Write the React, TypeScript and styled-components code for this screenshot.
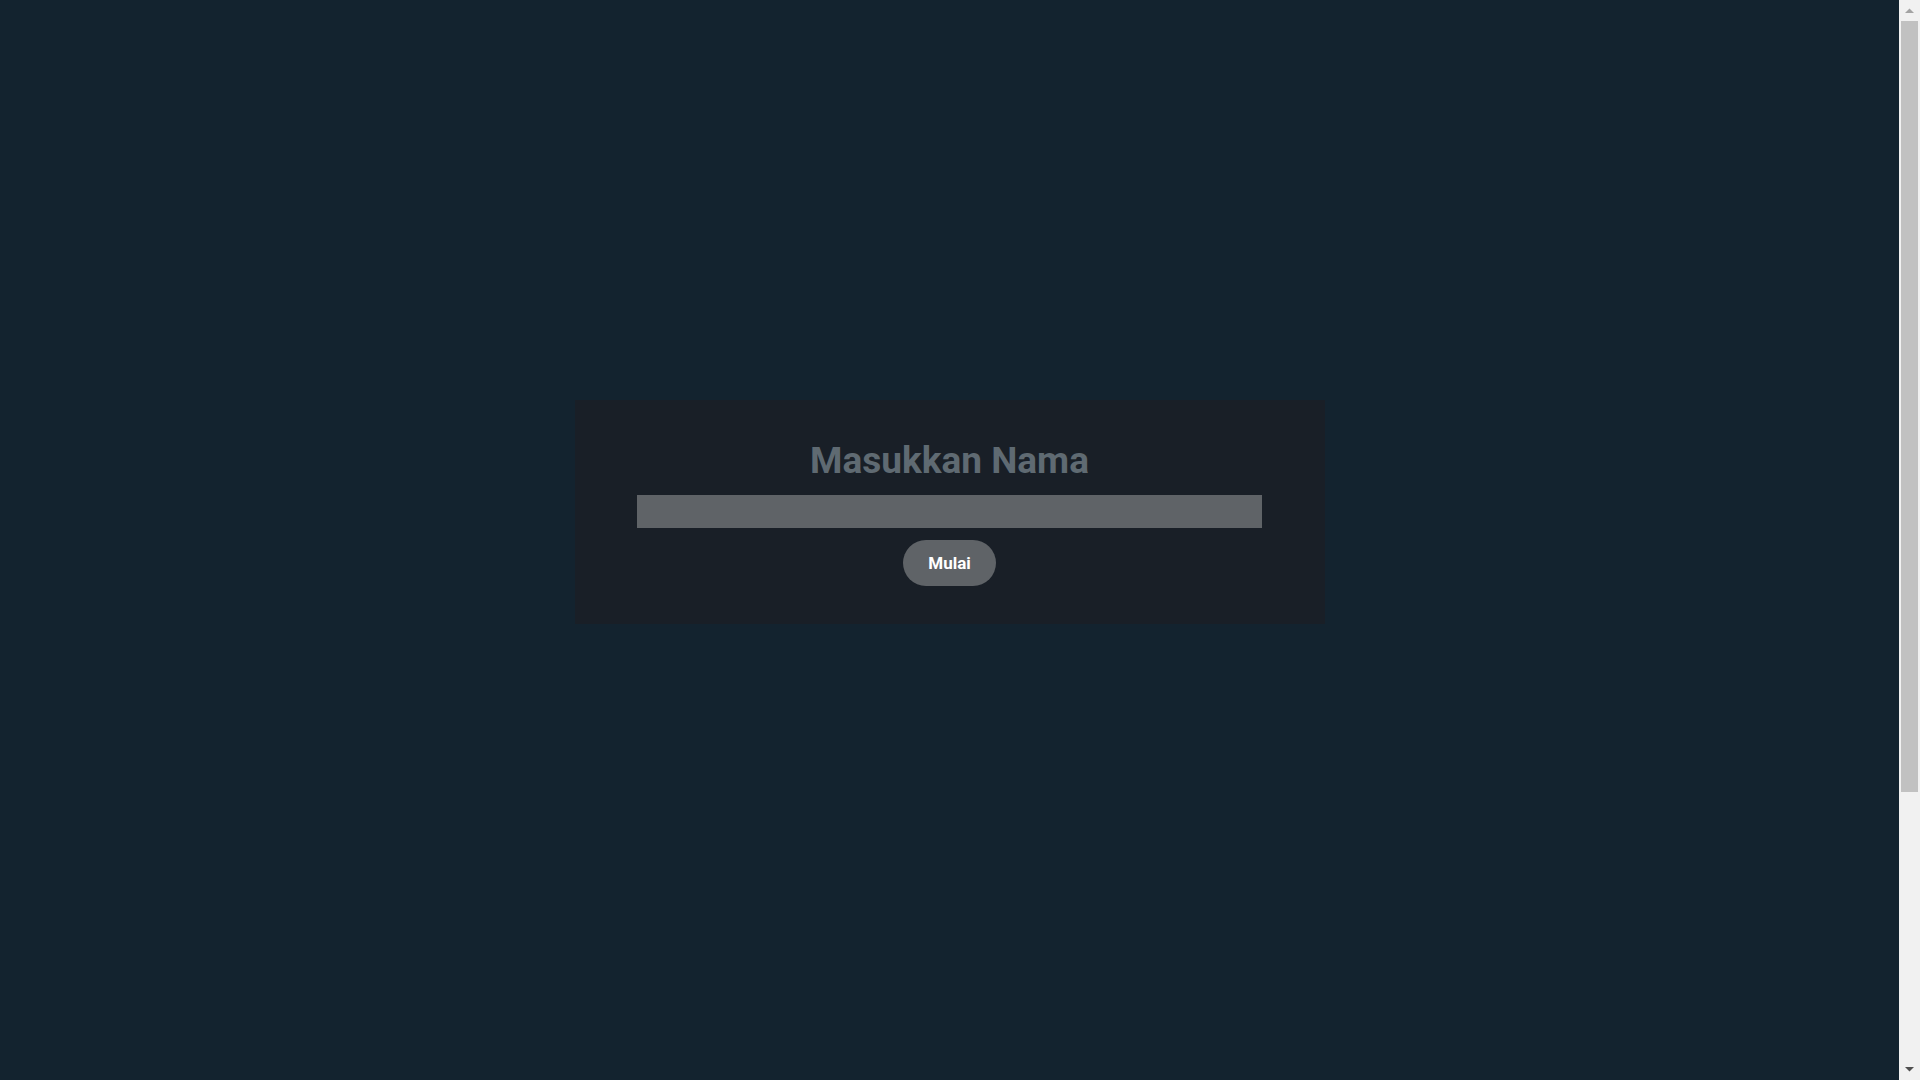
import React from "react";
import styled, { createGlobalStyle } from "styled-components";

const Global = createGlobalStyle`
  html, body {
    margin: 0;
    padding: 0;
    background: #13232f;
  }
  body {
    font-family: Roboto, "Liberation Sans", Arial, sans-serif;
  }
  * { box-sizing: border-box; }
  ::-webkit-scrollbar { width: 0; height: 0; }
`;

const Page = styled.main`
  min-height: 1463px;
  display: flex;
  flex-direction: column;
  align-items: center;
  padding: 400px 21px 0 0;
  background: #13232f;
`;

const Card = styled.section`
  width: 750px;
  height: 224px;
  background: #191f27;
  display: flex;
  flex-direction: column;
  align-items: center;
  padding-top: 40px;
`;

const Title = styled.h1`
  margin: 0;
  font-family: Roboto, "Liberation Sans", Arial, sans-serif;
  font-weight: 700;
  font-size: 37px;
  line-height: 42px;
  color: #5f6a72;
`;

const NameInput = styled.input`
  margin-top: 13px;
  width: 625px;
  height: 33px;
  border: none;
  outline: none;
  background: #5f6367;
  padding: 0 10px;
  font-family: Roboto, "Liberation Sans", Arial, sans-serif;
  font-size: 16px;
  color: #ffffff;
`;

const StartButton = styled.button`
  margin-top: 12px;
  height: 46px;
  padding: 0 25px;
  border: none;
  border-radius: 23px;
  background: #5f6367;
  color: #ffffff;
  font-family: Roboto, "Liberation Sans", Arial, sans-serif;
  font-weight: 700;
  font-size: 17px;
  cursor: pointer;
`;

/* Window scrollbar overlay (the page is taller than the viewport) */
const ScrollBar = styled.div`
  position: fixed;
  top: 0;
  right: 0;
  width: 21px;
  height: 100vh;
  background: #f1f1f1;
  display: flex;
  flex-direction: column;
`;

const ScrollArrow = styled.div`
  height: 21px;
  flex: none;
  display: flex;
  align-items: center;
  justify-content: center;
`;

const ScrollTrack = styled.div`
  flex: 1;
  padding: 0 2px;
`;

const ScrollThumb = styled.div`
  height: 771px;
  background: #c1c1c1;
`;

const Arrow = ({ up }: { up?: boolean }) => (
  <svg width="9" height="5" viewBox="0 0 9 5">
    <polygon
      points={up ? "0,5 9,5 4.5,0.5" : "0,0 9,0 4.5,4.5"}
      fill={up ? "#a3a3a3" : "#505050"}
    />
  </svg>
);

export default function App() {
  return (
    <>
      <Global />
      <Page>
        <Card>
          <Title>Masukkan Nama</Title>
          <NameInput type="text" />
          <StartButton>Mulai</StartButton>
        </Card>
      </Page>
      <ScrollBar aria-hidden="true">
        <ScrollArrow>
          <Arrow up />
        </ScrollArrow>
        <ScrollTrack>
          <ScrollThumb />
        </ScrollTrack>
        <ScrollArrow>
          <Arrow />
        </ScrollArrow>
      </ScrollBar>
    </>
  );
}
